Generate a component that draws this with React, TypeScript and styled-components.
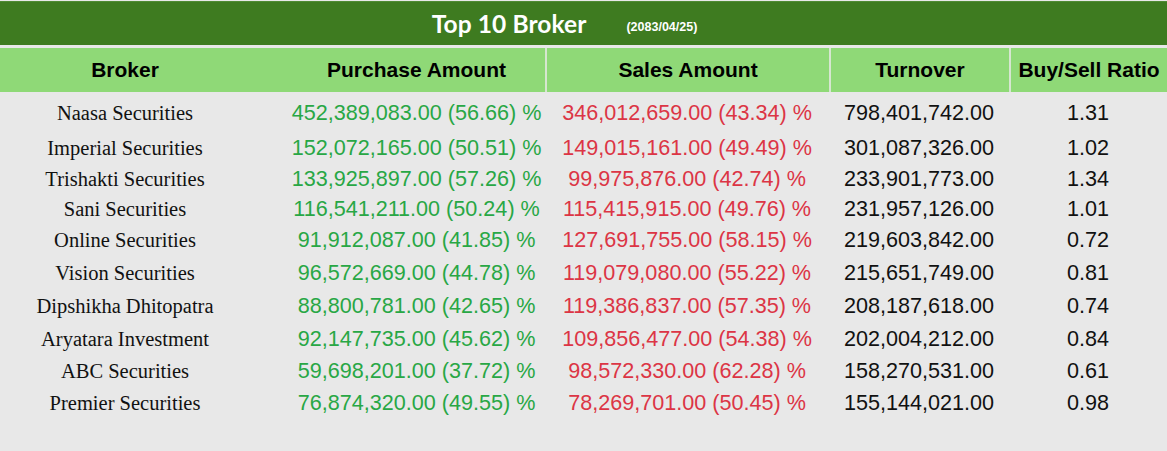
import styled, { createGlobalStyle } from "styled-components";

type BrokerRow = {
  name: string;
  purchase: string;
  purchasePct: string;
  sales: string;
  salesPct: string;
  turnover: string;
  ratio: string;
  height: number;
};

const rows: BrokerRow[] = [
  { name: "Naasa Securities", purchase: "452,389,083.00", purchasePct: "56.66", sales: "346,012,659.00", salesPct: "43.34", turnover: "798,401,742.00", ratio: "1.31", height: 35 },
  { name: "Imperial Securities", purchase: "152,072,165.00", purchasePct: "50.51", sales: "149,015,161.00", salesPct: "49.49", turnover: "301,087,326.00", ratio: "1.02", height: 31 },
  { name: "Trishakti Securities", purchase: "133,925,897.00", purchasePct: "57.26", sales: "99,975,876.00", salesPct: "42.74", turnover: "233,901,773.00", ratio: "1.34", height: 30 },
  { name: "Sani Securities", purchase: "116,541,211.00", purchasePct: "50.24", sales: "115,415,915.00", salesPct: "49.76", turnover: "231,957,126.00", ratio: "1.01", height: 31 },
  { name: "Online Securities", purchase: "91,912,087.00", purchasePct: "41.85", sales: "127,691,755.00", salesPct: "58.15", turnover: "219,603,842.00", ratio: "0.72", height: 33 },
  { name: "Vision Securities", purchase: "96,572,669.00", purchasePct: "44.78", sales: "119,079,080.00", salesPct: "55.22", turnover: "215,651,749.00", ratio: "0.81", height: 33 },
  { name: "Dipshikha Dhitopatra", purchase: "88,800,781.00", purchasePct: "42.65", sales: "119,386,837.00", salesPct: "57.35", turnover: "208,187,618.00", ratio: "0.74", height: 33 },
  { name: "Aryatara Investment", purchase: "92,147,735.00", purchasePct: "45.62", sales: "109,856,477.00", salesPct: "54.38", turnover: "202,004,212.00", ratio: "0.84", height: 32 },
  { name: "ABC Securities", purchase: "59,698,201.00", purchasePct: "37.72", sales: "98,572,330.00", salesPct: "62.28", turnover: "158,270,531.00", ratio: "0.61", height: 32 },
  { name: "Premier Securities", purchase: "76,874,320.00", purchasePct: "49.55", sales: "78,269,701.00", salesPct: "50.45", turnover: "155,144,021.00", ratio: "0.98", height: 30 },
];

const GlobalStyle = createGlobalStyle`
  html, body {
    margin: 0;
    padding: 0;
    background: #e8e8e8;
  }
  * {
    box-sizing: border-box;
  }
`;

const Page = styled.div`
  width: 1167px;
  height: 451px;
  background: #e8e8e8;
  overflow: hidden;
`;

const TitleBar = styled.div`
  margin-top: 1px;
  height: 44px;
  background: #3e7b20;
  display: flex;
  align-items: center;
  justify-content: center;
  padding-right: 38px;
  gap: 40px;
  border-top: 1px solid #4f8a33;
`;

const Title = styled.h1`
  margin: 0;
  color: #ffffff;
  font-family: Lato, "Open Sans", sans-serif;
  font-weight: 700;
  font-size: 24.5px;
  letter-spacing: 0.1px;
`;

const DateTag = styled.span`
  color: #ffffff;
  font-family: "Liberation Sans", Arial, sans-serif;
  font-weight: 700;
  font-size: 12.5px;
  margin-top: 7px;
`;

const Grid = styled.div`
  display: grid;
  grid-template-columns: 250px 295px 284px 180px 158px;
`;

const HeaderRow = styled(Grid)`
  margin-top: 3px;
  height: 44px;
  background: #8fd977;
`;

const HeadCell = styled.div<{ $divider?: boolean; $shift?: number }>`
  display: flex;
  align-items: center;
  justify-content: center;
  padding-left: ${({ $shift }) => $shift ?? 0}px;
  border-left: ${({ $divider }) => ($divider ? "2px solid #d6e6d0" : "none")};
  font-family: "Liberation Sans", Arial, sans-serif;
  font-weight: 700;
  font-size: 21px;
  color: #000;
`;

const Body = styled.div`
  padding-top: 9px;
`;

const BodyRow = styled(Grid)`
  align-items: start;
`;

const NameCell = styled.div`
  text-align: center;
  line-height: 24px;
  font-family: "Liberation Serif", "Times New Roman", serif;
  font-size: 20.5px;
  color: #111;
`;

const NumCell = styled.div<{ $tone?: "up" | "down"; $shift?: number }>`
  text-align: center;
  line-height: 24px;
  padding-left: ${({ $shift }) => $shift ?? 0}px;
  font-family: "Liberation Sans", Arial, sans-serif;
  font-size: 21.6px;
  white-space: nowrap;
  color: ${({ $tone }) =>
    $tone === "up" ? "#28a745" : $tone === "down" ? "#dc3545" : "#111"};
`;

export default function App() {
  return (
    <Page>
      <GlobalStyle />
      <TitleBar>
        <Title>Top 10 Broker</Title>
        <DateTag>(2083/04/25)</DateTag>
      </TitleBar>
      <HeaderRow>
        <HeadCell>Broker</HeadCell>
        <HeadCell $shift={38}>Purchase Amount</HeadCell>
        <HeadCell $divider>Sales Amount</HeadCell>
        <HeadCell $divider>Turnover</HeadCell>
        <HeadCell $divider>Buy/Sell Ratio</HeadCell>
      </HeaderRow>
      <Body>
        {rows.map((r) => (
          <BodyRow key={r.name} style={{ height: r.height }}>
            <NameCell>{r.name}</NameCell>
            <NumCell $tone="up" $shift={38}>
              {r.purchase} ({r.purchasePct}) %
            </NumCell>
            <NumCell $tone="down">
              {r.sales} ({r.salesPct}) %
            </NumCell>
            <NumCell>{r.turnover}</NumCell>
            <NumCell>{r.ratio}</NumCell>
          </BodyRow>
        ))}
      </Body>
    </Page>
  );
}
